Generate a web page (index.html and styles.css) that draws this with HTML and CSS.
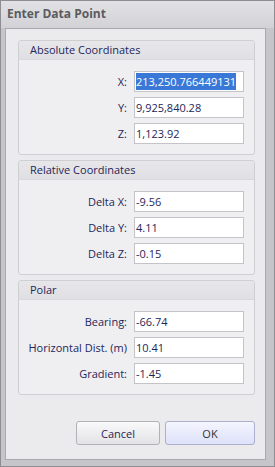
FILE: index.html
```html
<!DOCTYPE html>
<html lang="en">

<head>
  <meta charset="UTF-8">
  <meta name="viewport" content="width=device-width, initial-scale=1.0">
  <title>Enter Data Point</title>
  <link rel="stylesheet" href="styles.css">
</head>

<body>
  <div class="window">
    <div class="titlebar">Enter Data Point</div>

    <div class="client">
      <!-- Absolute -->
      <div class="group">
        <div class="group-header">Absolute Coordinates</div>
        <div class="group-body">
          <div class="row">
            <span class="label">X:</span>
            <div class="field"><span class="selected">213,250.766449131</span></div>
          </div>
          <div class="row">
            <span class="label">Y:</span>
            <div class="field">9,925,840.28</div>
          </div>
          <div class="row">
            <span class="label">Z:</span>
            <div class="field">1,123.92</div>
          </div>
        </div>
      </div>

      <!-- Relative -->
      <div class="group">
        <div class="group-header">Relative Coordinates</div>
        <div class="group-body">
          <div class="row">
            <span class="label">Delta X:</span>
            <div class="field">-9.56</div>
          </div>
          <div class="row">
            <span class="label">Delta Y:</span>
            <div class="field">4.11</div>
          </div>
          <div class="row">
            <span class="label">Delta Z:</span>
            <div class="field">-0.15</div>
          </div>
        </div>
      </div>

      <!-- Polar -->
      <div class="group">
        <div class="group-header">Polar</div>
        <div class="group-body">
          <div class="row">
            <span class="label">Bearing:</span>
            <div class="field">-66.74</div>
          </div>
          <div class="row">
            <span class="label">Horizontal Dist. (m)</span>
            <div class="field">10.41</div>
          </div>
          <div class="row">
            <span class="label">Gradient:</span>
            <div class="field">-1.45</div>
          </div>
        </div>
      </div>

      <div class="buttons">
        <button class="button cancel">Cancel</button>
        <button class="button ok">OK</button>
      </div>
    </div>
  </div>
</body>

</html>
```

FILE: styles.css
```css
body,
html {
  margin: 0;
  padding: 0;
  width: 100%;
  height: 100%;
  overflow: hidden;
  background-color: #ffffff;
}

.window {
  width: 275px;
  height: 467px;
  box-sizing: border-box;
  border: 1px solid #8e8e92;
  background: #c6c6ca;
  display: flex;
  flex-direction: column;
  font-family: "Open Sans", "Noto Sans", sans-serif;
}

.titlebar {
  height: 27px;
  box-sizing: border-box;
  padding: 0 0 0 6px;
  line-height: 26px;
  font-size: 12px;
  font-weight: bold;
  color: #5b5b60;
  background: linear-gradient(#e2e2e5, #d2d2d6);
}

.client {
  flex: 1;
  margin: 0 8px 6px 4px;
  border: 1px solid #a9a9ae;
  background: #ebebee;
  padding: 11px 10px 10px 12px;
  display: flex;
  flex-direction: column;
  gap: 5px;
}

.group {
  border: 1px solid #cfcfd3;
  border-radius: 3px;
  background: #efeff2;
}

.group-header {
  height: 18px;
  line-height: 18px;
  padding-left: 11px;
  font-size: 11px;
  color: #1f2658;
  background: linear-gradient(#e7e7ea, #e0e0e4);
  border-bottom: 1px solid #d9d9dd;
  border-radius: 3px 3px 0 0;
}

.group-body {
  padding: 11px 10px 10px 0;
  display: flex;
  flex-direction: column;
  gap: 5px;
}

.row {
  display: grid;
  grid-template-columns: 1fr 110px;
  gap: 7px;
  align-items: center;
}

.label {
  text-align: right;
  font-size: 11px;
  color: #1f2658;
  white-space: nowrap;
}

.field {
  height: 21px;
  box-sizing: border-box;
  border: 1px solid #c3c3c8;
  background: #ffffff;
  padding: 0 0 0 1px;
  line-height: 19px;
  font-size: 11px;
  color: #1f2658;
  white-space: nowrap;
  overflow: hidden;
}

.selected {
  background: #3a78d8;
  color: #ffffff;
  padding: 1px 0;
}

.buttons {
  margin-top: 21px;
  display: flex;
  justify-content: flex-end;
  gap: 5px;
}

.button {
  height: 24px;
  border: 1px solid #b1b1b6;
  border-radius: 3px;
  font-family: "Open Sans", "Noto Sans", sans-serif;
  font-size: 11px;
  color: #1f2658;
  padding: 0;
  background: linear-gradient(#f9f9fa, #e3e3e7);
}

.cancel {
  width: 84px;
}

.ok {
  width: 90px;
  color: #333333;
  border-color: #abb0cc;
  background: linear-gradient(#f4f5fe, #dde1fa);
}
```
